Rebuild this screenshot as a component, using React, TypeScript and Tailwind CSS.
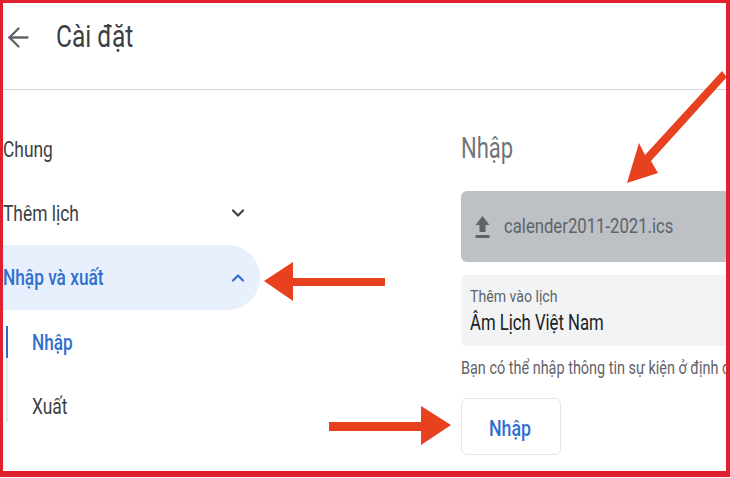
import { ArrowLeft, ChevronDown, ChevronUp } from 'lucide-react'

function Squeezed({ className, children }: { className: string; children: string }) {
  return <span className={`block origin-left whitespace-nowrap ${className}`}>{children}</span>
}

function NavRow({ label, icon }: { label: string; icon?: React.ReactNode }) {
  return (
    <div className="h-16 flex items-center justify-between pr-[12px] w-[257px]">
      <Squeezed className="scale-x-[0.79] text-[22px] text-[#3c4043]">{label}</Squeezed>
      {icon}
    </div>
  )
}

export default function App() {
  return (
    <div className="relative w-[730px] h-[478px] bg-white overflow-hidden font-['Roboto',sans-serif]">
      <div className="w-[730px] h-[477px] border-t-[3px] border-l-[3px] border-r-4 border-b-[6px] border-[#e0202e] overflow-hidden flex flex-col">
        <header className="h-[87px] shrink-0 border-b border-[#d5d7da] flex items-center pb-[17px]">
          <ArrowLeft size={31} strokeWidth={1.8} className="ml-0 text-[#5f6368] shrink-0" />
          <Squeezed className="ml-[22px] scale-x-[0.79] text-[31px] text-[#3c4043]">Cài đặt</Squeezed>
        </header>

        <div className="flex flex-1 min-h-0">
          <nav className="w-[458px] shrink-0 pt-[27px]">
            <NavRow label="Chung" />
            <NavRow label="Thêm lịch" icon={<ChevronDown size={20} strokeWidth={2.6} className="text-[#3c4043]" />} />
            <div className="h-[65px] w-[257px] bg-[#e8f0fe] rounded-r-[32px] flex items-center justify-between pr-[12px]">
              <Squeezed className="scale-x-[0.785] text-[22px] font-medium text-[#2f6fce]">Nhập và xuất</Squeezed>
              <ChevronUp size={20} strokeWidth={2.6} className="text-[#2f6fce]" />
            </div>
            <div className="mt-4 ml-[3px] w-[250px] border-l-2 border-[#e8eaed]">
              <div className="relative h-[32px] flex items-center pl-[24px]">
                <div className="absolute -left-[2px] top-0 h-full w-[2px] bg-[#2f6ac4]" />
                <Squeezed className="scale-x-[0.78] text-[22px] font-medium text-[#2f6fce]">Nhập</Squeezed>
              </div>
              <div className="h-[32px] mt-8 flex items-center pl-[24px] pt-px">
                <Squeezed className="scale-x-[0.79] text-[22px] text-[#3c4043]">Xuất</Squeezed>
              </div>
            </div>
          </nav>

          <main className="flex-1 min-w-0 pt-[40px]">
            <Squeezed className="scale-x-[0.76] text-[29px] leading-[36px] text-[#70757a]">Nhập</Squeezed>
            <div className="mt-[25px] h-[71px] bg-[#bdc1c6] rounded-l-md flex items-center pl-[14px]">
              <svg width="15" height="22" viewBox="0 0 15 22" className="shrink-0 text-[#5f6368]" fill="currentColor">
                <path d="M7.5 0 L14.5 9 H10.5 V16 H4.5 V9 H0.5 Z" />
                <rect x="0.5" y="19" width="14" height="3" />
              </svg>
              <Squeezed className="ml-[14px] scale-x-[0.795] text-[21px] text-[#5f6368]">calender2011-2021.ics</Squeezed>
            </div>
            <div className="mt-[13px] h-[71px] bg-[#f1f3f4] rounded-l-md pl-[9px] pt-[11px]">
              <Squeezed className="scale-x-[0.83] text-[17px] leading-[20px] text-[#5f6368]">Thêm vào lịch</Squeezed>
              <Squeezed className="mt-[3px] scale-x-[0.76] text-[22px] leading-[28px] text-[#202124]">Âm Lịch Việt Nam</Squeezed>
            </div>
            <Squeezed className="mt-[11px] scale-x-[0.825] text-[17.5px] leading-[22px] text-[#5f6368]">Bạn có thể nhập thông tin sự kiện ở định dạng iCal hoặc CSV</Squeezed>
            <button className="mt-[19px] w-[100px] h-[57px] pt-[3px] pr-[2px] bg-white border border-[#e3e5e8] rounded-md flex items-center justify-center">
              <span className="block scale-x-[0.81] text-[22px] font-medium text-[#2f6fce]">Nhập</span>
            </button>
          </main>
        </div>
      </div>

      {/* red arrows drawn over the screenshot */}
      <svg width="730" height="478" viewBox="0 0 730 478" className="absolute inset-0 pointer-events-none" fill="#e8411f">
        <path d="M722 71 L726 76 V78 L651 161 L658 173 L627 183 L639 143 L645 155 Z" />
        <path d="M264 281 L293 262 V278 H385 V286 H293 V301 Z" />
        <path d="M329 422 H421 V406 L451 425 L421 445 V431 H329 Z" />
      </svg>
    </div>
  )
}
